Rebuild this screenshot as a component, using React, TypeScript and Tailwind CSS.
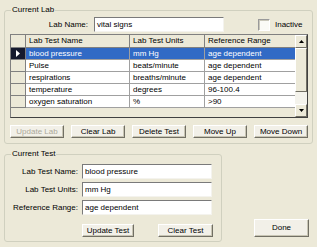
import React from 'react';

const rows = [
  ['blood pressure', 'mm Hg', 'age dependent'],
  ['Pulse', 'beats/minute', 'age dependent'],
  ['respirations', 'breaths/minute', 'age dependent'],
  ['temperature', 'degrees', '96-100.4'],
  ['oxygen saturation', '%', '>90'],
];

function Btn({ label, w, h = 'h-[13px]', disabled = false }: { label: string; w: string; h?: string; disabled?: boolean }) {
  return (
    <div
      className={`${w} ${h} flex items-center justify-center bg-[#F2F0E8] border border-t-white border-l-white border-r-[#716F64] border-b-[#716F64] shadow-[inset_-1px_-1px_0_#C8C5B4] ${
        disabled ? 'text-[#ACA899]' : 'text-black'
      }`}
    >
      {label}
    </div>
  );
}

function TextBox({ value, w }: { value: string; w: string }) {
  return (
    <div className={`${w} h-[15px] bg-white border border-t-[#7A7A7A] border-l-[#7A7A7A] border-r-[#F4F3EE] border-b-[#F4F3EE] flex items-center pl-[2px]`}>
      {value}
    </div>
  );
}

function Arrow({ up }: { up: boolean }) {
  return (
    <div className="w-[12px] h-[13px] flex items-center justify-center bg-[#ECE9D8] border border-t-white border-l-white border-r-[#716F64] border-b-[#716F64]">
      <svg width="5" height="3" viewBox="0 0 5 3">
        <path d={up ? 'M0 3 L2.5 0 L5 3 Z' : 'M0 0 L2.5 3 L5 0 Z'} fill="black" />
      </svg>
    </div>
  );
}

export default function App() {
  return (
    <div
      className="w-[317px] h-[247px] bg-[#ECE9D8] overflow-hidden text-[8px] leading-none text-black flex flex-col"
      style={{ fontFamily: '"Liberation Sans", Arial, sans-serif' }}
    >
      {/* Current Lab */}
      <div className="relative ml-[4px] mt-[10px] w-[309px] h-[134px] border border-[#D0D0BF] rounded-[3px] flex flex-col">
        <span className="absolute -top-[5px] left-[6px] px-[1px] bg-[#ECE9D8]">Current Lab</span>

        <div className="mt-[6px] h-[15px] flex items-center">
          <div className="w-[83px] text-right">Lab Name:</div>
          <div className="ml-[6px]">
            <TextBox value="vital signs" w="w-[130px]" />
          </div>
          <div className="ml-[34px] w-[12px] h-[12px] bg-[#FAFAF6] border border-t-[#9A9A9A] border-l-[#9A9A9A] border-r-white border-b-white shadow-[inset_1px_1px_0_#C9C7BA]" />
          <div className="ml-[5px]">Inactive</div>
        </div>

        {/* grid */}
        <div className="ml-[5px] mt-[2px] w-[298px] h-[84px] border border-t-[#808080] border-l-[#808080] border-r-[#404040] border-b-[#404040] flex">
          <div className="w-[284px] h-full bg-[#ECE9D8] flex flex-col">
            <div className="h-[13px] flex border-b border-[#808080]">
              <div className="w-[15px] border-r border-[#808080] bg-[#ECE9D8]" />
              <div className="w-[104px] border-r border-[#808080] pl-[3px] flex items-center">Lab Test Name</div>
              <div className="w-[75px] border-r border-[#808080] pl-[3px] flex items-center">Lab Test Units</div>
              <div className="w-[90px] pl-[3px] flex items-center">Reference Range</div>
            </div>
            {rows.map((r, i) => {
              const sel = i === 0;
              return (
                <div key={i} className="h-[12px] flex">
                  <div
                    className={`w-[15px] border-r border-b border-[#808080] flex items-center justify-center ${
                      sel ? 'bg-[#151A2E]' : 'bg-[#ECE9D8]'
                    }`}
                  >
                    {sel && (
                      <svg width="4" height="7" viewBox="0 0 4 7">
                        <path d="M0 0 L4 3.5 L0 7 Z" fill="white" />
                      </svg>
                    )}
                  </div>
                  {r.map((c, j) => (
                    <div
                      key={j}
                      className={`${j === 0 ? 'w-[104px]' : j === 1 ? 'w-[75px]' : 'w-[90px]'} border-b border-[#A0A0A0] ${
                        j < 2 ? 'border-r' : ''
                      } pl-[3px] flex items-center ${sel ? 'bg-[#316AC5] text-white' : 'bg-white'}`}
                    >
                      {c}
                    </div>
                  ))}
                </div>
              );
            })}
          </div>
          {/* scrollbar */}
          <div className="w-[12px] h-full flex flex-col bg-[#F4F3EC]">
            <Arrow up />
            <div className="h-[44px] bg-[#ECE9D8] border border-t-white border-l-white border-r-[#716F64] border-b-[#716F64]" />
            <div className="flex-1" />
            <Arrow up={false} />
          </div>
        </div>

        <div className="ml-[5px] mt-[7px] flex gap-[7px]">
          <Btn label="Update Lab" w="w-[54px]" disabled />
          <Btn label="Clear Lab" w="w-[54px]" />
          <Btn label="Delete Test" w="w-[54px]" />
          <Btn label="Move Up" w="w-[54px]" />
          <Btn label="Move Down" w="w-[54px]" />
        </div>
      </div>

      {/* Current Test + Done */}
      <div className="mt-[10px] ml-[4px] flex items-end">
        <div className="relative w-[218px] h-[88px] border border-[#D0D0BF] rounded-[3px] flex flex-col">
          <span className="absolute -top-[5px] left-[6px] px-[1px] bg-[#ECE9D8]">Current Test</span>
          <div className="mt-[9px] flex flex-col gap-[3px]">
            {[
              ['Lab Test Name:', 'blood pressure'],
              ['Lab Test Units:', 'mm Hg'],
              ['Reference Range:', 'age dependent'],
            ].map(([l, v]) => (
              <div key={l} className="h-[15px] flex items-center">
                <div className="w-[73px] text-right">{l}</div>
                <div className="ml-[4px]">
                  <TextBox value={v} w="w-[130px]" />
                </div>
              </div>
            ))}
          </div>
          <div className="mt-[9px] ml-[77px] flex gap-[24px]">
            <Btn label="Update Test" w="w-[52px]" />
            <Btn label="Clear Test" w="w-[55px]" />
          </div>
        </div>
        <div className="ml-[32px] mb-[5px]">
          <Btn label="Done" w="w-[55px]" h="h-[18px]" />
        </div>
      </div>
    </div>
  );
}
